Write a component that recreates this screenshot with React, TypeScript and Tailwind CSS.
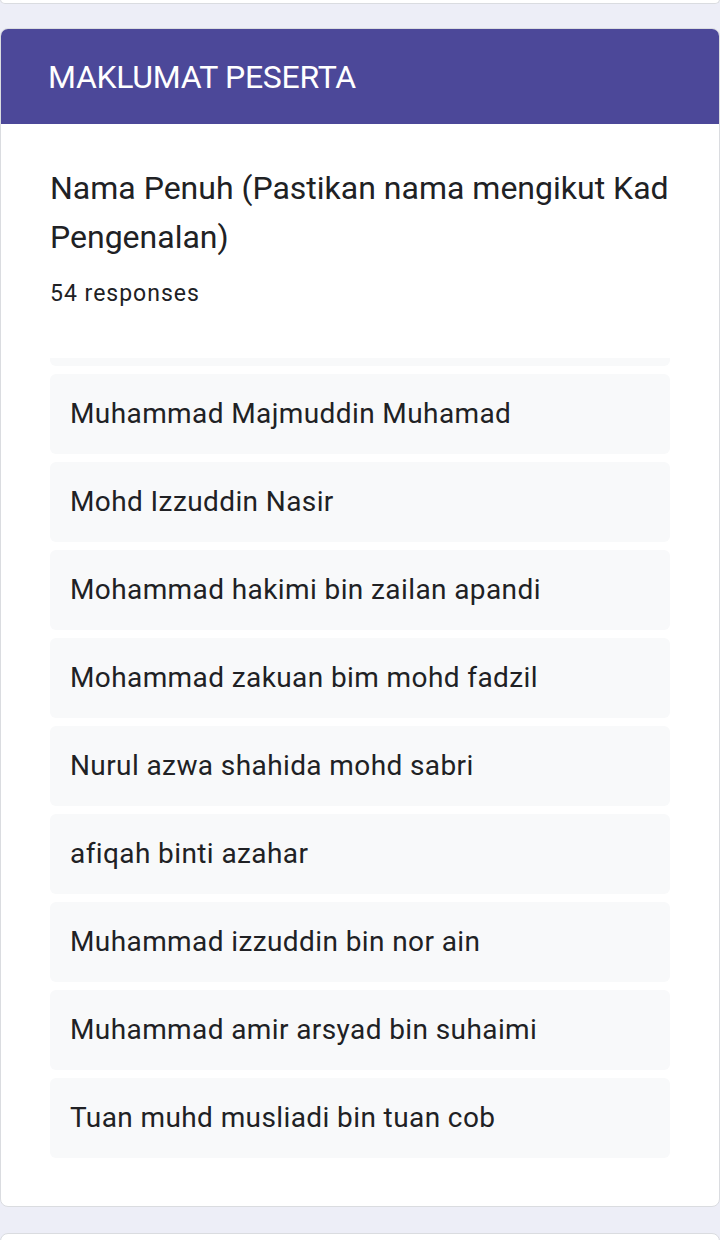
const names = [
  "Muhammad Majmuddin Muhamad",
  "Mohd Izzuddin Nasir",
  "Mohammad hakimi bin zailan apandi",
  "Mohammad zakuan bim mohd fadzil",
  "Nurul azwa shahida mohd sabri",
  "afiqah binti azahar",
  "Muhammad izzuddin bin nor ain",
  "Muhammad amir arsyad bin suhaimi",
  "Tuan muhd musliadi bin tuan cob",
];

export default function App() {
  return (
    <div
      className="min-h-screen bg-[#edeef7] overflow-hidden"
      style={{ fontFamily: "Roboto, 'Noto Sans', sans-serif" }}
    >
      {/* previous card, only its bottom edge shows */}
      <div className="h-[5px] bg-white border border-t-0 border-[#dadce0] rounded-b-lg -mt-px"></div>

      <div className="mt-[24px] bg-white rounded-lg border border-[#dadce0] overflow-hidden">
        <div className="h-[96px] bg-[#4c4899] -mx-px -mt-px flex items-center px-[48px]">
          <h2 className="text-white text-[32px] tracking-[-0.3px] pt-[2px]">MAKLUMAT PESERTA</h2>
        </div>

        <div className="px-[49px] pt-[40px] pb-[48px]">
          <h3 className="text-[32px] leading-[49px] text-[#202124]">
            Nama Penuh (Pastikan nama mengikut Kad Pengenalan)
          </h3>
          <p className="mt-[16px] text-[23px] leading-[32px] text-[#202124] tracking-[1px]">54 responses</p>

          {/* response list, scrolled down to the end */}
          <div className="mt-[48px] h-[800px] overflow-hidden flex flex-col justify-end gap-[8px]">
            <div className="shrink-0 h-[80px] bg-[#f8f9fa] rounded-[6px]"></div>
            {names.map((name) => (
              <div
                key={name}
                className="shrink-0 h-[80px] bg-[#f8f9fa] rounded-[6px] flex items-center px-[20px]"
              >
                <span className="text-[28px] text-[#202124] tracking-[0.4px]">{name}</span>
              </div>
            ))}
          </div>
        </div>
      </div>

      {/* next card, top edge */}
      <div className="mt-[26px] h-[40px] bg-white rounded-t-lg border border-[#dadce0]"></div>
    </div>
  );
}
